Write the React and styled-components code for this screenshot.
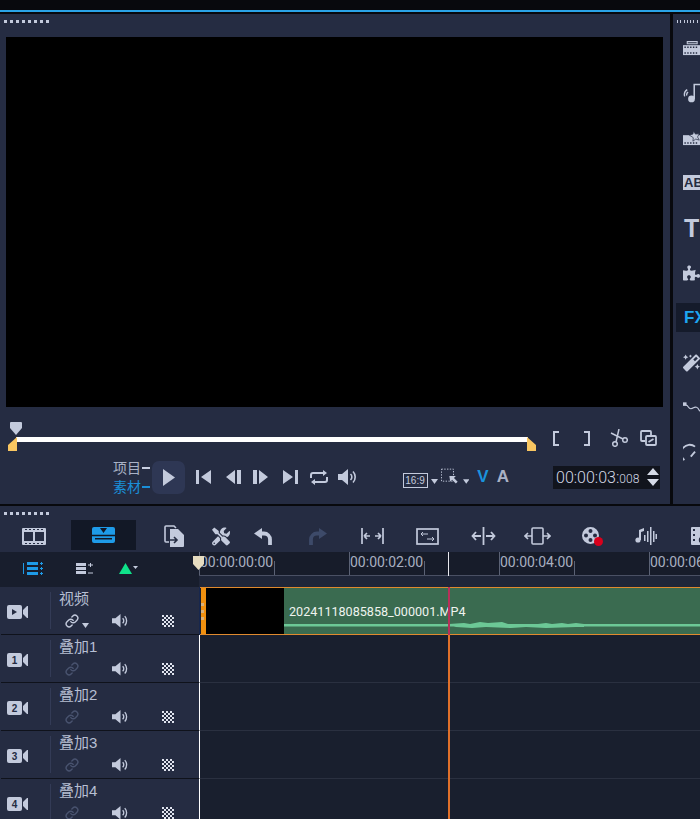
import React from "react";
import styled, { createGlobalStyle } from "styled-components";
import { FaTools, FaPuzzlePiece, FaMagic } from "react-icons/fa";
import { Link as ChainIcon } from "lucide-react";

const PANEL = "#252c42";
const GLYPH = "#c3cadc";

const GlobalStyle = createGlobalStyle`
  html, body { margin: 0; padding: 0; background: #08090d; overflow: hidden; }
  * { box-sizing: border-box; }
`;

const Page = styled.div`
  width: 700px;
  height: 819px;
  overflow: hidden;
  display: flex;
  flex-direction: column;
  background: #08090d;
  font-family: "Liberation Sans", "Noto Sans CJK SC", sans-serif;
`;

const TopLine = styled.div`
  height: 2px;
  flex: none;
  margin: 10px 0 2px;
  background: #2aa3e6;
`;

const Upper = styled.div`
  display: flex;
  height: 490px;
  flex: none;
  gap: 3px;
`;

const PlayerPanel = styled.section`
  width: 670px;
  flex: none;
  background: ${PANEL};
  display: flex;
  flex-direction: column;
`;

const Grip = styled.div`
  display: flex;
  gap: 3px;
  height: ${(p) => p.$h}px;
  flex: none;
  padding: 6px 0 0 4px;
  i {
    width: 3px;
    height: 3px;
    background: ${GLYPH};
  }
`;

const Dots = ({ h = 23 }) => (
  <Grip $h={h}>
    {Array.from({ length: 8 }).map((_, i) => (
      <i key={i} />
    ))}
  </Grip>
);

const Screen = styled.div`
  height: 370px;
  margin: 0 7px 0 6px;
  background: #000;
  flex: none;
`;

const ScrubArea = styled.div`
  position: relative;
  height: 44px;
  flex: none;
  padding: 30px 0 0 16px;
  display: flex;
  align-items: flex-start;
`;

const ScrubBar = styled.div`
  width: 512px;
  height: 5px;
  background: #fff;
`;

const Marker = styled.svg`
  position: absolute;
  left: 10px;
  top: 15px;
`;

const Handle = styled.svg`
  position: absolute;
  top: 30px;
  left: ${(p) => p.$x}px;
`;

const ClipTools = styled.div`
  display: flex;
  align-items: center;
  height: 18px;
  margin: -8px 0 0 25px;
`;

const Bracket = styled.span`
  width: 6px;
  height: 15px;
  border: solid ${GLYPH};
  border-width: 2px 0;
  ${(p) => (p.$end ? "border-right-width: 2px;" : "border-left-width: 2px;")}
  margin-right: ${(p) => p.$gap}px;
`;

const ControlRow = styled.div`
  display: flex;
  align-items: center;
  height: 36px;
  flex: none;
  margin-top: 8px;
  padding-left: 113px;
`;

const ModeCol = styled.div`
  display: flex;
  flex-direction: column;
  width: 39px;
  gap: 1px;
`;

const Mode = styled.div`
  display: flex;
  align-items: center;
  font-size: 14px;
  line-height: 18px;
  color: ${(p) => (p.$active ? "#1a8fd8" : "#aab2c6")};
  &::after {
    content: "";
    width: 8px;
    height: 2px;
    margin-left: 1px;
    background: ${(p) => (p.$active ? "#1a8fd8" : "#c8cfe0")};
  }
`;

const PlayButton = styled.div`
  width: 33px;
  height: 33px;
  flex: none;
  border-radius: 7px;
  background: #2e3754;
  display: flex;
  align-items: center;
  justify-content: center;
`;

const Slot = styled.div`
  width: ${(p) => p.$w}px;
  flex: none;
  display: flex;
  align-items: center;
  justify-content: center;
  ${(p) => p.$gap && `margin-left: ${p.$gap}px;`}
`;

const RatioBox = styled.span`
  width: 25px;
  height: 15px;
  margin-top: 6px;
  border: 1px solid #c3cadc;
  font-size: 10px;
  line-height: 13px;
  text-align: center;
  color: #c3cadc;
`;

const TrackLetter = styled.span`
  font-size: 17px;
  font-weight: 700;
  color: ${(p) => (p.$on ? "#1a93dd" : "#aab2c6")};
`;

const Timecode = styled.div`
  width: 107px;
  height: 23px;
  flex: none;
  margin-left: 43px;
  background: #11141d;
  display: flex;
  align-items: center;
  justify-content: space-between;
  padding: 0 1px 0 3px;
  font-family: "Roboto", sans-serif;
  font-weight: 300;
  font-size: 16px;
  color: #d3d9e6;
  small {
    font-size: 12px;
  }
`;

const SidePanel = styled.aside`
  flex: 1;
  min-width: 0;
  overflow: hidden;
  background: ${PANEL};
  display: flex;
  flex-direction: column;
`;

const SideItem = styled.div`
  height: 45px;
  flex: none;
  display: flex;
  align-items: center;
  padding-left: ${(p) => (p.$active ? 7 : 10)}px;
  margin-left: ${(p) => (p.$active ? 3 : 0)}px;
`;

const FxChip = styled.div`
  width: 30px;
  height: 29px;
  flex: none;
  display: flex;
  align-items: center;
  padding-left: 8px;
  margin-left: -7px;
  background: #151b2b;
  color: #1ea5f0;
  font-size: 17px;
  font-weight: 700;
`;

const TextChip = styled.div`
  width: 24px;
  height: 15px;
  flex: none;
  background: ${GLYPH};
  color: ${PANEL};
  font-size: 13px;
  line-height: 15px;
  font-weight: 700;
  padding-left: 1px;
`;

const BigT = styled.div`
  color: ${GLYPH};
  font-size: 25px;
  font-weight: 700;
  line-height: 24px;
  padding-left: 1px;
`;

const Timeline = styled.section`
  flex: 1;
  min-height: 0;
  margin-top: 2px;
  position: relative;
  display: flex;
  flex-direction: column;
  background: ${PANEL};
`;

const Toolbar = styled.div`
  display: flex;
  align-items: stretch;
  height: 32px;
  flex: none;
  margin-top: -9px;
  width: 760px;
`;

const ToolSlot = styled(Slot)`
  ${(p) => p.$active && "height: 30px; background: #121826;"}
`;

const RulerRow = styled.div`
  display: flex;
  height: 35px;
  flex: none;
`;

const RulerLeft = styled.div`
  width: 199px;
  flex: none;
  height: 35px;
  background: #181e2d;
  display: flex;
  align-items: center;
  padding: 0 0 2px 22px;
`;

const RulerRight = styled.div`
  flex: 1;
  min-width: 0;
  background: #1f2639;
`;

const Ruler = styled.div`
  height: 24px;
  background: #171c2a;
  border-bottom: 1px solid #4a5064;
  display: flex;
`;

const RulerCell = styled.div`
  width: 150px;
  flex: none;
  height: 23px;
  border-left: 1px solid #5b6275;
  position: relative;
  font-family: "Roboto", sans-serif;
  font-size: 14px;
  line-height: 21px;
  color: #a8afc0;
  white-space: nowrap;
  &::after {
    content: "";
    position: absolute;
    left: 74px;
    bottom: 0;
    height: 14px;
    border-left: 1px solid #5b6275;
  }
`;

const StartMarker = styled.svg`
  position: absolute;
  left: 193px;
  top: 50px;
`;

const Lanes = styled.div`
  flex: 1;
  min-height: 0;
`;

const TrackRow = styled.div`
  display: grid;
  grid-template-columns: 199px 1fr;
  height: 48px;
`;

const TrackHead = styled.div`
  display: flex;
  margin-left: 1px;
  background: ${PANEL};
  border-bottom: 1px solid #0f121b;
`;

const CamCell = styled.div`
  width: 50px;
  flex: none;
  display: flex;
  align-items: center;
  padding: 2px 0 0 6px;
  position: relative;
  &::after {
    content: "";
    position: absolute;
    right: 0;
    top: 5px;
    bottom: 5px;
    border-right: 1px solid #333b56;
  }
`;

const CamNumber = styled.span`
  position: absolute;
  left: 6px;
  top: calc(50% + 1px);
  width: 15px;
  transform: translateY(-50%);
  text-align: center;
  color: ${PANEL};
  font-size: 10px;
  font-weight: 700;
`;

const InfoCell = styled.div`
  flex: 1;
  display: flex;
  flex-direction: column;
  padding: 2px 0 0 8px;
`;

const TrackName = styled.div`
  font-size: 15px;
  line-height: 20px;
  color: #b7bfd2;
`;

const HeadIcons = styled.div`
  display: flex;
  align-items: center;
  height: 22px;
  margin-top: 1px;
`;

const Lane = styled.div`
  background: #191f2e;
  border-left: 1px solid ${(p) => (p.$first ? "#17274e" : "#fff")};
  border-bottom: ${(p) => (p.$first ? "none" : "1px solid #2a3040")};
  position: relative;
  min-width: 0;
  overflow: hidden;
`;

const Clip = styled.div`
  height: 48px;
  display: flex;
  border-top: 1px solid #e08a2e;
  border-bottom: 1px solid #e08a2e;
  background: #191f2e;
`;

const ClipGrip = styled.div`
  width: 5px;
  margin-left: 1px;
  flex: none;
  background: #f0900f;
  position: relative;
  &::after {
    content: "";
    position: absolute;
    left: 0;
    top: 15px;
    width: 3px;
    height: 3px;
    background: #d9b27c;
    box-shadow: 0 7px 0 #d9b27c, 0 14px 0 #d9b27c;
  }
`;

const ClipThumb = styled.div`
  width: 78px;
  flex: none;
  background: #000;
`;

const ClipBody = styled.div`
  flex: 1;
  position: relative;
  background: #3a6b50;
  color: #eef3ee;
  font-family: "Roboto", sans-serif;
  font-size: 12.6px;
  line-height: 48px;
  padding-left: 5px;
  white-space: nowrap;
`;

const Wave = styled.svg`
  position: absolute;
  left: 0;
  bottom: 5px;
`;

const Playhead = styled.div`
  position: absolute;
  left: 448px;
  top: 46px;
  bottom: 0;
  width: 2px;
  pointer-events: none;
  display: flex;
  flex-direction: column;
`;

const HeadPart = styled.div`
  width: ${(p) => p.$w}px;
  height: ${(p) => (p.$h ? `${p.$h}px` : "auto")};
  flex: ${(p) => (p.$h ? "none" : "1")};
  background: ${(p) => p.$c};
`;

/* ---- drawings ---- */
const Play = () => (
  <svg width="12" height="17" viewBox="0 0 12 17"><path d="M0 0l12 8.5L0 17z" fill={GLYPH} /></svg>
);
const Skip = ({ flip }) => (
  <svg width="15" height="14" viewBox="0 0 15 14" style={flip ? { transform: "scaleX(-1)" } : undefined}>
    <path d="M0 0h3v14H0zM15 0v14L5 7z" fill={GLYPH} />
  </svg>
);
const Step = ({ flip }) => (
  <svg width="16" height="14" viewBox="0 0 16 14" style={flip ? { transform: "scaleX(-1)" } : undefined}>
    <path d="M9 0v14L0 7zM11 0h4v14h-4z" fill={GLYPH} />
  </svg>
);
const Repeat = () => (
  <svg width="18" height="15" viewBox="0 0 18 15" fill="none" stroke={GLYPH} strokeWidth="2">
    <path d="M1 8V5a2 2 0 0 1 2-2h10M17 7v3a2 2 0 0 1-2 2H5" />
    <path d="M13 0l4 3-4 3zM5 9l-4 3 4 3z" fill={GLYPH} stroke="none" />
  </svg>
);
const Speaker = ({ w = 20 }) => (
  <svg width={w} height={w * 0.8} viewBox="0 0 20 16" fill="none" stroke={GLYPH} strokeWidth="1.6">
    <path d="M0 5h4l6-5v16l-6-5H0z" fill={GLYPH} stroke="none" />
    <path d="M12.5 5a4 4 0 0 1 0 6" />
    <path d="M15 2.5a8 8 0 0 1 0 11" />
  </svg>
);
const Caret = ({ c = GLYPH }) => (
  <svg width="7" height="5" viewBox="0 0 7 5" style={{ marginTop: 8, marginLeft: 3 }}>
    <path d="M0 0h7L3.5 5z" fill={c} />
  </svg>
);
const Crop = () => (
  <svg width="20" height="18" viewBox="0 0 20 18" fill="none">
    <rect x="0.5" y="0.5" width="13" height="13" stroke={GLYPH} strokeDasharray="1.5 1.5" />
    <path d="M9 8h7l-2 2 4 4-2 2-4-4-2 2z" fill={GLYPH} />
  </svg>
);
const Scissors = () => (
  <svg width="18" height="18" viewBox="0 0 18 18" fill="none" stroke={GLYPH} strokeWidth="1.5">
    <circle cx="5" cy="15" r="2.3" />
    <circle cx="15" cy="11" r="2.3" />
    <path d="M6 13L9 0M13 10L1 4" />
  </svg>
);
const CopyClip = () => (
  <svg width="17" height="16" viewBox="0 0 17 16" fill="none" stroke={GLYPH} strokeWidth="1.8">
    <path d="M5 11H2a1 1 0 0 1-1-1V2a1 1 0 0 1 1-1h8a1 1 0 0 1 1 1v3" />
    <rect x="6" y="6" width="10" height="9" rx="1" />
    <path d="M8.5 12l5-3" />
  </svg>
);
const UpDown = () => (
  <svg width="12" height="18" viewBox="0 0 12 18"><path d="M6 0l6 7H0zM0 11h12l-6 7z" fill="#d5dae6" /></svg>
);

const Film = () => (
  <svg width="24" height="17" viewBox="0 0 24 17">
    <path fillRule="evenodd" fill={GLYPH} d="M1 0h22a1 1 0 0 1 1 1v15a1 1 0 0 1-1 1H1a1 1 0 0 1-1-1V1a1 1 0 0 1 1-1zM2 4v9h9V4zm11 0v9h9V4z" />
    <path d="M3 1.5h18M3 15.5h18" stroke={PANEL} strokeDasharray="2 2" />
  </svg>
);
const TimelineMode = () => (
  <svg width="23" height="16" viewBox="0 0 23 16">
    <rect width="23" height="16" rx="2" fill="#1e9be8" />
    <path d="M0 8.500h23" stroke="#121826" strokeWidth="1.500" />
    <path d="M8 1h7l-3.500 5zM3 11h17v1.500H3z" fill="#121826" />
  </svg>
);
const DocArrow = () => (
  <svg width="20" height="22" viewBox="0 0 20 22" fill="none">
    <path d="M5 17H2a1 1 0 0 1-1-1V2a1 1 0 0 1 1-1h8l2 2" stroke={GLYPH} strokeWidth="1.6" />
    <path d="M6 4h8l6 6v11a1 1 0 0 1-1 1H6z" fill={GLYPH} />
    <path d="M5 15h8m-3-3l3 3-3 3" stroke={PANEL} strokeWidth="1.6" />
  </svg>
);
const Turn = ({ flip, c = GLYPH }) => (
  <svg width="18" height="17" viewBox="0 0 18 17" fill="none" style={flip ? { transform: "scaleX(-1)" } : undefined}>
    <path d="M8 0v11L0 5.500z" fill={c} />
    <path d="M7 5.500h3a6 6 0 0 1 6 6V17" stroke={c} strokeWidth="3.800" />
  </svg>
);
const FitClip = () => (
  <svg width="23" height="16" viewBox="0 0 23 16" fill="none" stroke={GLYPH} strokeWidth="1.700">
    <path d="M1 0v16M22 0v16M3 8h6M3 8l3-3M3 8l3 3M20 8h-6M20 8l-3-3M20 8l-3 3" />
  </svg>
);
const SwapBox = () => (
  <svg width="23" height="17" viewBox="0 0 23 17" fill="none" stroke={GLYPH}>
    <rect x="1" y="1" width="21" height="15" strokeWidth="1.700" />
    <path d="M5 6h7M5 6l2-2M5 6l2 2M18 11h-7M18 11l-2-2M18 11l-2 2" strokeWidth="1" />
  </svg>
);
const Split = () => (
  <svg width="25" height="18" viewBox="0 0 25 18" fill="none" stroke={GLYPH} strokeWidth="1.800">
    <path d="M12.500 0v18M10 9H2m3-4L1.500 9 5 13M15 9h8m-3-4 3.500 4-3.500 4" />
  </svg>
);
const Stretch = () => (
  <svg width="27" height="18" viewBox="0 0 27 18" fill="none" stroke={GLYPH} strokeWidth="1.600">
    <rect x="8" y="1" width="11" height="16" rx="1" />
    <path d="M8 9H1m3-3L1 9l3 3M19 9h7m-3-3 3 3-3 3" />
  </svg>
);
const Reel = () => (
  <svg width="21" height="19" viewBox="0 0 21 19">
    <path fillRule="evenodd" fill={GLYPH} d="M8.500 0a8.500 8.500 0 1 1 0 17 8.500 8.500 0 0 1 0-17zm0 2a2 2 0 1 0 0 4 2 2 0 0 0 0-4zm0 9a2 2 0 1 0 0 4 2 2 0 0 0 0-4zM4 6.500a2 2 0 1 0 0 4 2 2 0 0 0 0-4zm9 0a2 2 0 1 0 0 4 2 2 0 0 0 0-4z" />
    <circle cx="16.500" cy="14.500" r="4.500" fill="#d8001c" />
  </svg>
);
const AudioMix = () => (
  <svg width="22" height="20" viewBox="0 0 22 20" fill={GLYPH}>
    <circle cx="3" cy="14" r="2.600" />
    <path d="M4 14V4l5-2v3L6 6v8z" />
    <path d="M9 9h1.500v6H9zM12 5h1.500v11H12zM15 1h1.500v18H15zM18 5h1.500v11H18zM20.500 8H22v5h-1.500z" />
  </svg>
);
const MediaBox = () => (
  <svg width="24" height="18" viewBox="0 0 24 18" fill={GLYPH}>
    <path d="M1 0h22a1 1 0 0 1 1 1v16a1 1 0 0 1-1 1H1a1 1 0 0 1-1-1V1a1 1 0 0 1 1-1z" />
    <path d="M2 2h2v2H2zM2 7h2v2H2zM2 12h2v2H2z" fill={PANEL} />
    <circle cx="11" cy="13" r="2.500" fill="none" stroke={PANEL} strokeWidth="1.500" />
  </svg>
);

const FilmStrip = ({ star, stack }) => (
  <svg width="24" height="20" viewBox="0 0 24 20" fill={GLYPH}>
    {stack && <path d="M6 1h14v3H6z" fill="none" stroke={GLYPH} strokeWidth="1.500" />}
    <path d="M0 6h24v14H0z" />
    <path d="M2 16h2v2H2zM6 16h2v2H6zM10 16h2v2h-2zM14 16h2v2h-2zM18 16h2v2h-2z" fill={PANEL} />
    {stack && <path d="M2 8h2v2H2zM6 8h2v2H6zM10 8h2v2h-2zM14 8h2v2h-2zM18 8h2v2h-2z" fill={PANEL} />}
    {star && <path d="M15 0l2.500 4.500L23 4l-2.500 4.500L23 13l-5-1.500-4 3 .5-5L9 6l5-1.500z" stroke={PANEL} />}
  </svg>
);
const NoteArc = () => (
  <svg width="20" height="22" viewBox="0 0 20 22" fill="none">
    <path d="M2 15a7 7 0 0 1 3-8M4.500 14a3.500 3.500 0 0 1 1.500-4" stroke={GLYPH} strokeWidth="1.600" />
    <circle cx="10" cy="18" r="4" fill={GLYPH} />
    <path d="M13.200 18V1h6.800" stroke={GLYPH} strokeWidth="1.800" />
  </svg>
);

const TrackAll = () => (
  <svg width="20" height="13" viewBox="0 0 20 13" fill="#1e9be8">
    <path d="M1 1H0v11h1zM4 0h11v3H4zM4 5h11v3H4zM4 10h11v3H4z" />
    <path d="M17 1.500h3M18.500 0v3M17 6.500h3M18.500 5v3M17 11.500h3M18.500 10v3" stroke="#1e9be8" />
  </svg>
);
const TrackAdd = () => (
  <svg width="18" height="13" viewBox="0 0 18 13" fill={GLYPH}>
    <path d="M0 1h10v3H0zM0 5h10v3H0zM0 9h10v3H0z" />
    <path d="M12 3h5M14.500 1v4M12 11h5" stroke={GLYPH} />
  </svg>
);
const GreenUp = () => (
  <svg width="19" height="11" viewBox="0 0 19 11">
    <path d="M6.500 0L13 11H0z" fill="#0fe28a" />
    <path d="M14 3h5l-2.500 3z" fill={GLYPH} />
  </svg>
);

const Camera = ({ n }) => (
  <>
    <svg width="21" height="14" viewBox="0 0 21 14">
      <rect width="15" height="14" rx="2" fill={GLYPH} />
      <path d="M16 5l4-4h1v12h-1l-4-4z" fill={GLYPH} />
      {!n && <path d="M5 4l5 3-5 3z" fill={PANEL} />}
    </svg>
    {n && <CamNumber>{n}</CamNumber>}
  </>
);
const Checker = ({ id }) => (
  <svg width="12" height="12" viewBox="0 0 12 12">
    <defs>
      <pattern id={id} width="4" height="4" patternUnits="userSpaceOnUse">
        <rect width="2" height="2" fill="#dfe3ee" />
        <rect x="2" y="2" width="2" height="2" fill="#dfe3ee" />
      </pattern>
    </defs>
    <rect width="12" height="12" fill={`url(#${id})`} />
  </svg>
);

const SIDE = [
  <FilmStrip key="m" stack />,
  <NoteArc key="n" />,
  <FilmStrip key="t" star />,
  <TextChip key="ab">AB</TextChip>,
  <BigT key="T">T</BigT>,
  <FaPuzzlePiece key="p" size={20} color={GLYPH} />,
  <FxChip key="fx">FX</FxChip>,
  <FaMagic key="w" size={20} color={GLYPH} />,
  <svg key="path" width="24" height="18" viewBox="0 0 24 18" fill="none" stroke={GLYPH} strokeWidth="1.600">
    <rect x="0" y="1" width="5" height="5" fill={GLYPH} stroke="none" />
    <path d="M4 5c4 0 3 5 7 5s4-3 8-2 3 5 5 5" />
  </svg>,
  <svg key="g" width="24" height="22" viewBox="0 0 24 22" fill="none" stroke={GLYPH} strokeWidth="2.600">
    <path d="M2 21A11.500 11.500 0 0 1 17 2" />
    <path d="M11 16l6-7" />
  </svg>,
];

const TRACKS = ["叠加1", "叠加2", "叠加3", "叠加4"];

const HeadControls = ({ dim, id }) => (
  <HeadIcons>
    <Slot $w={dim ? 26 : 36}>
      <ChainIcon size={14} strokeWidth={2.4} color={dim ? "#49536f" : GLYPH} />
      {!dim && <Caret />}
    </Slot>
    <Slot $w={26} $gap={dim ? 22 : 12}><Speaker w={17} /></Slot>
    <Slot $w={26} $gap={22}><Checker id={id} /></Slot>
  </HeadIcons>
);

export default function App() {
  return (
    <Page>
      <GlobalStyle />
      <TopLine />
      <Upper>
        <PlayerPanel>
          <Dots />
          <Screen />
          <ScrubArea>
            <ScrubBar />
            <Marker width="12" height="13" viewBox="0 0 12 13">
              <path d="M1 0h10a1 1 0 0 1 1 1v5l-6 7-6-7V1a1 1 0 0 1 1-1z" fill={GLYPH} />
            </Marker>
            <Handle $x={8} width="9" height="14" viewBox="0 0 9 14">
              <path d="M9 0v14H0V8z" fill="#f9c661" />
            </Handle>
            <Handle $x={527} width="9" height="14" viewBox="0 0 9 14">
              <path d="M0 0l9 8v6H0z" fill="#f9c661" />
            </Handle>
            <ClipTools>
              <Bracket $gap={25} />
              <Bracket $end $gap={20} />
              <Slot $w={18}><Scissors /></Slot>
              <Slot $w={17} $gap={12}><CopyClip /></Slot>
            </ClipTools>
          </ScrubArea>
          <ControlRow>
            <ModeCol>
              <Mode>项目</Mode>
              <Mode $active>素材</Mode>
            </ModeCol>
            <PlayButton><Play /></PlayButton>
            <Slot $w={15} $gap={11}><Skip /></Slot>
            <Slot $w={16} $gap={15}><Step /></Slot>
            <Slot $w={16} $gap={10}><Step flip /></Slot>
            <Slot $w={15} $gap={15}><Skip flip /></Slot>
            <Slot $w={18} $gap={12}><Repeat /></Slot>
            <Slot $w={20} $gap={10}><Speaker /></Slot>
            <Slot $w={36} $gap={44}><RatioBox>16:9</RatioBox><Caret /></Slot>
            <Slot $w={28} $gap={3}><Crop /><Caret /></Slot>
            <Slot $w={14} $gap={7}><TrackLetter $on>V</TrackLetter></Slot>
            <Slot $w={14} $gap={6}><TrackLetter>A</TrackLetter></Slot>
            <Timecode>
              <span>00:00:03:<small>008</small></span>
              <UpDown />
            </Timecode>
          </ControlRow>
        </PlayerPanel>
        <SidePanel>
          <Dots h={11} />
          {SIDE.map((icon, i) => (
            <SideItem key={i} $active={i === 6}>{icon}</SideItem>
          ))}
        </SidePanel>
      </Upper>
      <Timeline>
        <Dots />
        <Toolbar>
          <ToolSlot $w={68}><Film /></ToolSlot>
          <ToolSlot $w={65} $gap={3} $active><TimelineMode /></ToolSlot>
          <ToolSlot $w={76}><DocArrow /></ToolSlot>
          <ToolSlot $w={18}><FaTools size={19} color={GLYPH} /></ToolSlot>
          <ToolSlot $w={66}><Turn /></ToolSlot>
          <ToolSlot $w={44}><Turn flip c="#3d4a69" /></ToolSlot>
          <ToolSlot $w={64}><FitClip /></ToolSlot>
          <ToolSlot $w={46}><SwapBox /></ToolSlot>
          <ToolSlot $w={66}><Split /></ToolSlot>
          <ToolSlot $w={42}><Stretch /></ToolSlot>
          <ToolSlot $w={68}><Reel /></ToolSlot>
          <ToolSlot $w={40}><AudioMix /></ToolSlot>
          <ToolSlot $w={74}><MediaBox /></ToolSlot>
        </Toolbar>
        <RulerRow>
          <RulerLeft>
            <Slot $w={22}><TrackAll /></Slot>
            <Slot $w={18} $gap={32}><TrackAdd /></Slot>
            <Slot $w={22} $gap={23}><GreenUp /></Slot>
          </RulerLeft>
          <RulerRight>
            <Ruler>
              <RulerCell>00:00:00:00</RulerCell>
              <RulerCell>00:00:02:00</RulerCell>
              <RulerCell>00:00:04:00</RulerCell>
              <RulerCell>00:00:06:00</RulerCell>
            </Ruler>
          </RulerRight>
        </RulerRow>
        <StartMarker width="11" height="14" viewBox="0 0 11 14">
          <path d="M0 0h11v8l-5.500 6L0 8z" fill="#e6dcc0" />
        </StartMarker>
        <Lanes>
          <TrackRow>
            <TrackHead>
              <CamCell><Camera /></CamCell>
              <InfoCell>
                <TrackName>视频</TrackName>
                <HeadControls id="chk0" />
              </InfoCell>
            </TrackHead>
            <Lane $first>
              <Clip>
                <ClipGrip />
                <ClipThumb />
                <ClipBody>
                  20241118085858_000001.MP4
                  <Wave width="420" height="8" viewBox="0 0 420 8">
                    <path d="M0 3h420v2.500H0z" fill="#6cc896" />
                    <path d="M165 3l15-1 6 1 10-2 8 1 14-1 6 2h30l8-1 6 1 10-1 6 1 8-1 8 1v3l-8 0-30 1-20-1-15 1-25-1-14 1-16-1z" fill="#6cc896" />
                  </Wave>
                </ClipBody>
              </Clip>
            </Lane>
          </TrackRow>
          {TRACKS.map((name, i) => (
            <TrackRow key={name}>
              <TrackHead>
                <CamCell><Camera n={name.slice(2)} /></CamCell>
                <InfoCell>
                  <TrackName>{name}</TrackName>
                  <HeadControls dim id={`chk${i + 1}`} />
                </InfoCell>
              </TrackHead>
              <Lane />
            </TrackRow>
          ))}
        </Lanes>
        <Playhead>
          <HeadPart $w={1} $h={24} $c="#e8e8ee" />
          <HeadPart $w={1} $h={11} $c="transparent" />
          <HeadPart $w={2} $h={48} $c="#b8305a" />
          <HeadPart $w={2} $c="#e0702a" />
        </Playhead>
      </Timeline>
    </Page>
  );
}
